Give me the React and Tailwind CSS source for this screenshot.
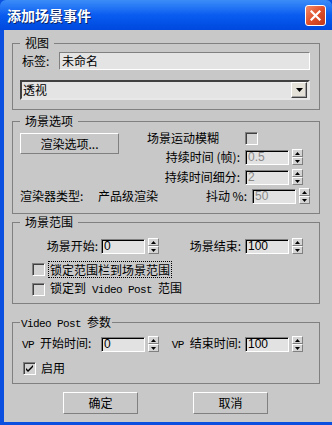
const mono = "font-['Liberation_Mono'] text-[11px] tracking-[-0.6px] leading-[14px] whitespace-pre";

function Field({ value, disabled, w = "w-[44px]" }) {
  return (
    <div
      className={`${w} h-[15px] bg-[#e2e2e2] border border-t-[#808080] border-l-[#808080] border-b-white border-r-white shadow-[inset_1px_1px_0_#000] pl-[2px] font-['Liberation_Sans'] text-[12px] leading-[13px] ${
        disabled ? "text-[#8a8a8a]" : "text-black"
      }`}
    >
      {value}
    </div>
  );
}

function Spinner() {
  const half =
    "flex-1 flex items-center justify-center bg-[#d4d4d4] border border-t-white border-l-white border-b-[#808080] border-r-[#808080]";
  return (
    <div className="w-[11px] h-[16px] flex flex-col">
      <div className={half}>
        <svg width="5" height="3" viewBox="0 0 5 3">
          <path d="M2.5 0L5 3H0z" fill="#000" />
        </svg>
      </div>
      <div className={half}>
        <svg width="5" height="3" viewBox="0 0 5 3">
          <path d="M0 0h5L2.5 3z" fill="#000" />
        </svg>
      </div>
    </div>
  );
}

function Check({ checked }) {
  return (
    <div className="w-[13px] h-[13px] shrink-0 bg-[#d2d2d2] border border-t-[#808080] border-l-[#808080] border-b-white border-r-white shadow-[inset_1px_1px_0_#404040] flex items-center justify-center">
      {checked && (
        <svg width="9" height="9" viewBox="0 0 9 9">
          <path d="M1 4l2 2 5-5v2L3 8 1 6z" fill="#000" />
        </svg>
      )}
    </div>
  );
}

function Btn({ children, className = "" }) {
  return (
    <div
      className={`flex items-center justify-center bg-[#c8c8c8] border border-t-white border-l-white border-b-[#808080] border-r-[#808080] ${className}`}
    >
      {children}
    </div>
  );
}

export default function App() {
  return (
    <div className="w-[332px] h-[425px] bg-[#0a4fe0] flex flex-col overflow-hidden font-['Noto_Sans_CJK_SC',sans-serif] text-[12px] leading-[14px] text-black">
      {/* title bar */}
      <div className="h-[30px] shrink-0 flex items-center justify-between pl-[7px] pr-[6px] bg-gradient-to-b from-[#3b8cf8] via-[#0a5cf0] to-[#0048de] rounded-t-[6px]">
        <span className="text-white font-bold text-[14px] [text-shadow:1px_1px_0_#0a246a]">添加场景事件</span>
        <div className="w-[21px] h-[21px] rounded-[3px] border border-white bg-gradient-to-br from-[#f08a6a] via-[#e0502a] to-[#c0381a] flex items-center justify-center">
          <svg width="11" height="11" viewBox="0 0 11 11">
            <path d="M1.5 1.5l8 8M9.5 1.5l-8 8" stroke="#fff" strokeWidth="2.2" strokeLinecap="square" />
          </svg>
        </div>
      </div>

      {/* body */}
      <div className="flex-1 ml-[4px] mb-[3px] bg-[#c8c8c8] pt-[6px] flex flex-col">
        {/* 视图 */}
        <fieldset className="ml-[8px] mr-[12px] h-[74px] border border-[#808080] pl-[7px] pr-[9px]">
          <legend className="px-[5px] h-[14px] leading-[14px]">视图</legend>
          <div className="flex items-center mt-[2px]">
            <span className="w-[39px] pl-[2px]">标签:</span>
            <div className="flex-1 h-[18px] bg-[#e4e4e4] border border-t-[#808080] border-l-[#808080] border-b-white border-r-white pl-[2px] leading-[16px]">
              未命名
            </div>
          </div>
          <div className="mt-[10px] h-[20px] bg-[#e4e4e4] border-2 border-t-[#404040] border-l-[#404040] border-b-[#e8e8e8] border-r-[#e8e8e8] flex items-center justify-between pl-[1px] pr-[1px]">
            <span className="leading-[14px]">透视</span>
            <div className="w-[16px] h-[16px] flex items-center justify-center bg-[#e4e2d8] border border-t-white border-l-white border-b-[#404040] border-r-[#404040] shadow-[inset_-1px_-1px_0_#a0a0a0]">
              <svg width="7" height="4" viewBox="0 0 7 4">
                <path d="M0 0h7L3.5 4z" fill="#000" />
              </svg>
            </div>
          </div>
        </fieldset>

        {/* 场景选项 */}
        <fieldset className="ml-[8px] mr-[12px] mt-[4px] h-[100px] border border-[#808080] pl-[7px] pr-[9px]">
          <legend className="px-[5px] h-[14px] leading-[14px]">场景选项</legend>
          <div className="flex">
            <div className="w-[127px]">
              <Btn className="mt-[5px] w-[99px] h-[21px]">渲染选项...</Btn>
            </div>
            <div className="flex-1 pt-[1px]">
              <div className="h-[18px] flex items-center">
                <span className="w-[98px]">场景运动模糊</span>
                <Check />
              </div>
              <div className="mt-[2px] flex items-center">
                <span className="w-[93px] text-right">持续时间 (帧):</span>
                <div className="ml-[5px]"><Field value="0.5" disabled /></div>
                <div className="ml-[3px]"><Spinner /></div>
              </div>
              <div className="mt-[4px] flex items-center">
                <span className="w-[93px] text-right">持续时间细分:</span>
                <div className="ml-[5px]"><Field value="2" disabled /></div>
                <div className="ml-[3px]"><Spinner /></div>
              </div>
            </div>
          </div>
          <div className="mt-[3px] flex items-center">
            <span className="w-[78px]">渲染器类型:</span>
            <span>产品级渲染</span>
            <span className="flex-1 text-right">抖动 %:</span>
            <div className="ml-[5px]"><Field value="50" disabled /></div>
            <div className="ml-[3px]"><Spinner /></div>
          </div>
        </fieldset>

        {/* 场景范围 */}
        <fieldset className="ml-[8px] mr-[12px] mt-[1px] h-[89px] border border-[#808080] pl-[7px] pr-[9px]">
          <legend className="px-[5px] h-[14px] leading-[14px]">场景范围</legend>
          <div className="mt-[9px] flex items-center">
            <span className="w-[78px] text-right">场景开始:</span>
            <div className="ml-[3px]"><Field value="0" /></div>
            <div className="ml-[3px]"><Spinner /></div>
            <span className="w-[82px] text-right">场景结束:</span>
            <div className="ml-[4px]"><Field value="100" /></div>
            <div className="ml-[3px]"><Spinner /></div>
          </div>
          <div className="mt-[7px] h-[16px] pl-[12px] flex items-center">
            <Check />
            <span className="ml-[4px] px-[1px] outline-1 outline-dotted outline-black leading-[15px]">锁定范围栏到场景范围</span>
          </div>
          <div className="mt-[4px] h-[16px] pl-[12px] flex items-center">
            <Check />
            <span className="ml-[5px] leading-[14px]">
              锁定到<span className={mono}> Video Post </span>范围
            </span>
          </div>
        </fieldset>

        {/* Video Post 参数 */}
        <fieldset className="ml-[8px] mr-[12px] mt-[11px] h-[69px] border border-[#808080] pl-[7px] pr-[9px]">
          <legend className="px-[1px] h-[14px] leading-[14px]">
            <span className={mono}>Video Post </span>参数
          </legend>
          <div className="mt-[7px] flex items-center">
            <span className="w-[78px] pl-[2px]">
              <span className={mono}>VP </span>开始时间:
            </span>
            <div className="ml-[3px]"><Field value="0" /></div>
            <div className="ml-[3px]"><Spinner /></div>
            <span className="w-[82px] text-right">
              <span className={mono}>VP </span>结束时间:
            </span>
            <div className="ml-[4px]"><Field value="100" /></div>
            <div className="ml-[3px]"><Spinner /></div>
          </div>
          <div className="mt-[9px] pl-[3px] flex items-center">
            <Check checked />
            <span className="ml-[5px]">启用</span>
          </div>
        </fieldset>

        {/* buttons */}
        <div className="mt-[8px] flex pl-[59px]">
          <Btn className="w-[75px] h-[22px]">确定</Btn>
          <Btn className="ml-[55px] w-[75px] h-[22px]">取消</Btn>
        </div>
      </div>
    </div>
  );
}
